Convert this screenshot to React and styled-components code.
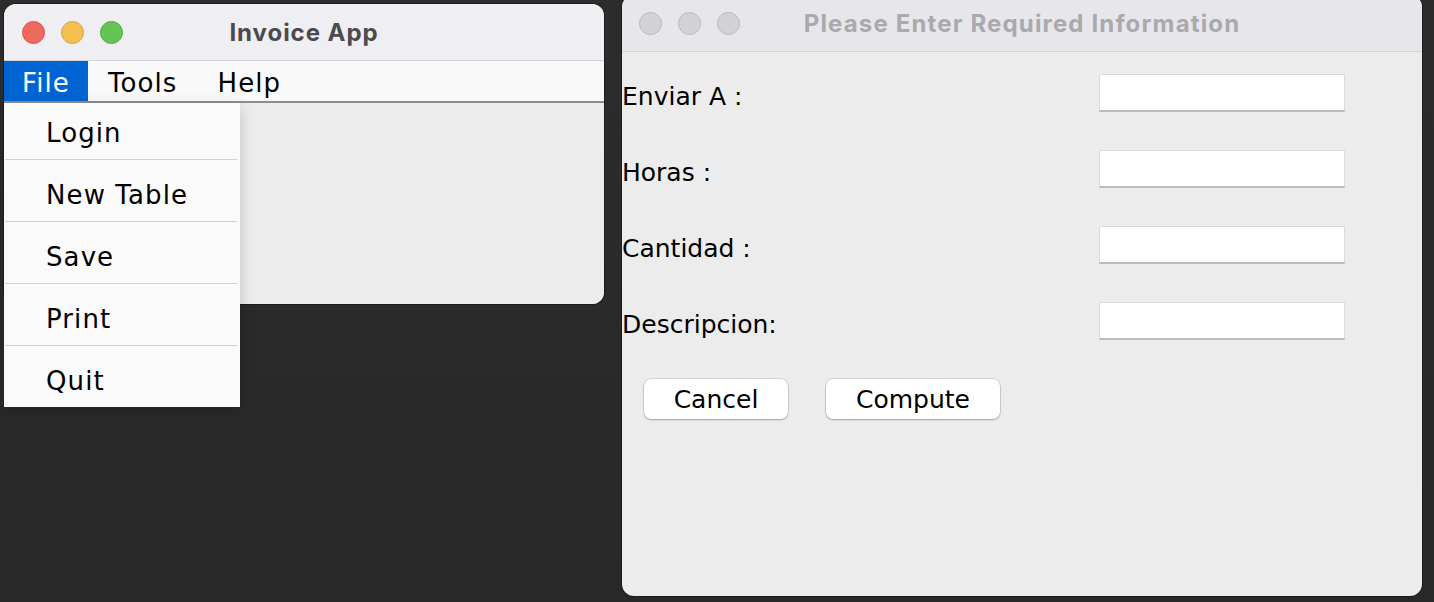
import React from "react";
import styled, { createGlobalStyle } from "styled-components";

const Global = createGlobalStyle`
  html, body { margin: 0; padding: 0; }
  body {
    width: 1434px;
    height: 602px;
    overflow: hidden;
    background: #2a2a2a;
    font-family: "DejaVu Sans", "Liberation Sans", sans-serif;
  }
`;

const Desktop = styled.div`
  position: relative;
  width: 1434px;
  height: 602px;
  background: linear-gradient(180deg, #2c2c2c 0%, #282828 100%);
  overflow: hidden;
`;

const Window = styled.div`
  position: absolute;
  left: ${(p) => p.$x}px;
  top: ${(p) => p.$y}px;
  width: ${(p) => p.$w}px;
  height: ${(p) => p.$h}px;
  border-radius: 12px;
  overflow: hidden;
  background: #ececec;
  display: flex;
  flex-direction: column;
  box-shadow: 0 0 0 1px rgba(0, 0, 0, 0.35);
`;

const TitleBar = styled.div`
  position: relative;
  flex: 0 0 auto;
  height: 56px;
  background: ${(p) => (p.$active ? "#efeef3" : "#e7e6ea")};
  border-bottom: 1px solid #d3d2d6;
  display: flex;
  align-items: center;
  justify-content: center;
`;

const Lights = styled.div`
  position: absolute;
  left: ${(p) => p.$left}px;
  top: 0;
  bottom: 0;
  display: flex;
  align-items: center;
  gap: 16px;
`;

const Light = styled.span`
  width: 23px;
  height: 23px;
  border-radius: 50%;
  box-sizing: border-box;
  background: ${(p) => p.$bg};
  border: 1px solid ${(p) => p.$bd};
`;

const Title = styled.div`
  font-family: Inter, "Liberation Sans", sans-serif;
  font-weight: 700;
  font-size: 24px;
  letter-spacing: ${(p) => (p.$active ? 0.95 : 1.15)}px;
  color: ${(p) => (p.$active ? "#4b4a4e" : "#aaa9ad")};
`;

const MenuBar = styled.div`
  flex: 0 0 auto;
  height: 40px;
  background: #f9f9f9;
  border-bottom: 2px solid #8d8d8d;
  display: flex;
  align-items: stretch;
`;

const MenuTitle = styled.div`
  display: flex;
  align-items: center;
  padding: 3px ${(p) => (p.$open ? 18 : 20)}px 0;
  font-size: 26px;
  letter-spacing: 1.1px;
  color: ${(p) => (p.$open ? "#ffffff" : "#000000")};
  background: ${(p) => (p.$open ? "#0064d3" : "transparent")};
`;

const Content = styled.div`
  flex: 1 1 auto;
  background: #ececec;
`;

const Dropdown = styled.div`
  position: absolute;
  left: 4px;
  top: 103px;
  width: 236px;
  background: #fafafa;
  box-shadow: 0 4px 14px rgba(0, 0, 0, 0.18);
  display: flex;
  flex-direction: column;
`;

const MenuItem = styled.div`
  height: 61px;
  box-sizing: border-box;
  display: flex;
  align-items: flex-end;
  padding: 0 0 13px 42px;
  font-size: 26px;
  line-height: 26px;
  letter-spacing: 1.1px;
  color: #000;
  &:first-child {
    height: 56px;
  }
`;

const Separator = styled.div`
  height: 1px;
  margin: 0 3px 0 1px;
  background: #d2d2d2;
`;

const Form = styled.div`
  flex: 1 1 auto;
  display: flex;
  flex-direction: column;
  padding-top: 22px;
`;

const Grid = styled.div`
  display: grid;
  grid-template-columns: 477px 246px;
  grid-auto-rows: 38px;
  row-gap: 38px;
  align-items: center;
`;

const Label = styled.div`
  font-size: 25px;
  color: #000;
  padding-top: 6px;
`;

const Field = styled.div`
  height: 38px;
  box-sizing: border-box;
  background: #fff;
  border: 1px solid #dcdcdc;
  border-bottom: 2px solid #bcbcbc;
`;

const ButtonRow = styled.div`
  display: flex;
  gap: 38px;
  padding: 39px 0 0 22px;
`;

const Button = styled.div`
  width: ${(p) => p.$w}px;
  height: 40px;
  box-sizing: border-box;
  border-radius: 7px;
  background: #fff;
  box-shadow: 0 0 0 0.5px rgba(0, 0, 0, 0.18), 0 1px 2px rgba(0, 0, 0, 0.25);
  display: flex;
  align-items: center;
  justify-content: center;
  font-size: 25px;
  color: #000;
`;

const TrafficLights = ({ active, left }) => (
  <Lights $left={left}>
    {active ? (
      <>
        <Light $bg="#ee6a5f" $bd="#d5544b" />
        <Light $bg="#f5bf4f" $bd="#d9a23b" />
        <Light $bg="#62c555" $bd="#4fa93f" />
      </>
    ) : (
      <>
        <Light $bg="#d3d2d6" $bd="#b9b8bc" />
        <Light $bg="#d3d2d6" $bd="#b9b8bc" />
        <Light $bg="#d3d2d6" $bd="#b9b8bc" />
      </>
    )}
  </Lights>
);

const menuItems = ["Login", "New Table", "Save", "Print", "Quit"];
const fields = ["Enviar A :", "Horas :", "Cantidad :", "Descripcion:"];

export default function App() {
  return (
    <>
      <Global />
      <Desktop>
        <Window $x={622} $y={-5} $w={800} $h={601}>
          <TitleBar>
            <TrafficLights left={17} />
            <Title>Please Enter Required Information</Title>
          </TitleBar>
          <Form>
            <Grid>
              {fields.map((f) => (
                <React.Fragment key={f}>
                  <Label>{f}</Label>
                  <Field />
                </React.Fragment>
              ))}
            </Grid>
            <ButtonRow>
              <Button $w={144}>Cancel</Button>
              <Button $w={174}>Compute</Button>
            </ButtonRow>
          </Form>
        </Window>

        <Window $x={4} $y={4} $w={600} $h={300}>
          <TitleBar $active>
            <TrafficLights active left={18} />
            <Title $active>Invoice App</Title>
          </TitleBar>
          <MenuBar>
            <MenuTitle $open>File</MenuTitle>
            <MenuTitle>Tools</MenuTitle>
            <MenuTitle>Help</MenuTitle>
          </MenuBar>
          <Content />
        </Window>

        <Dropdown>
          {menuItems.map((m, i) => (
            <React.Fragment key={m}>
              {i > 0 && <Separator />}
              <MenuItem>{m}</MenuItem>
            </React.Fragment>
          ))}
        </Dropdown>
      </Desktop>
    </>
  );
}
